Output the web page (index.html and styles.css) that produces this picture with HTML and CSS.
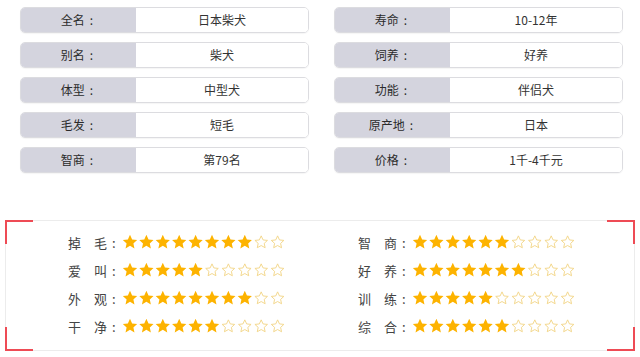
FILE: index.html
```html
<!DOCTYPE html>
<html lang="zh-CN">
<head>
<meta charset="utf-8">
<title>日本柴犬</title>
<link rel="stylesheet" href="styles.css">
</head>
<body>
<svg class="defs" width="0" height="0" aria-hidden="true">
  <defs>
    <symbol id="sf" viewBox="0 0 24 24"><path class="full" d="M12 1.2l3.2 7 7.5.8-5.6 5.1 1.6 7.5L12 17.8l-6.7 3.8 1.6-7.5L1.3 9l7.5-.8z"/></symbol>
    <symbol id="se" viewBox="0 0 24 24"><path class="empty" d="M12 2.8l2.8 6.1 6.6.7-4.9 4.5 1.4 6.5L12 17.3l-5.9 3.3 1.4-6.5-4.9-4.5 6.6-.7z"/></symbol>
  </defs>
</svg>

<div class="info">
  <div class="item"><span class="k">全名<span class="kc">:</span></span><span class="v">日本柴犬</span></div>
  <div class="item"><span class="k">寿命<span class="kc">:</span></span><span class="v">10-12年</span></div>
  <div class="item"><span class="k">别名<span class="kc">:</span></span><span class="v">柴犬</span></div>
  <div class="item"><span class="k">饲养<span class="kc">:</span></span><span class="v">好养</span></div>
  <div class="item"><span class="k">体型<span class="kc">:</span></span><span class="v">中型犬</span></div>
  <div class="item"><span class="k">功能<span class="kc">:</span></span><span class="v">伴侣犬</span></div>
  <div class="item"><span class="k">毛发<span class="kc">:</span></span><span class="v">短毛</span></div>
  <div class="item"><span class="k">原产地<span class="kc">:</span></span><span class="v">日本</span></div>
  <div class="item"><span class="k">智商<span class="kc">:</span></span><span class="v">第79名</span></div>
  <div class="item"><span class="k">价格<span class="kc">:</span></span><span class="v">1千-4千元</span></div>
</div>

<div class="rating">
  <span class="corner tl"></span><span class="corner tr"></span>
  <span class="corner bl"></span><span class="corner br"></span>

  <div class="row"><span class="lbl">掉　毛<span class="colon">:</span></span>
    <svg class="stars" width="164" height="16" viewBox="0 0 164 16"><use href="#sf" x="0" width="16" height="16"/><use href="#sf" x="16.4" width="16" height="16"/><use href="#sf" x="32.8" width="16" height="16"/><use href="#sf" x="49.2" width="16" height="16"/><use href="#sf" x="65.6" width="16" height="16"/><use href="#sf" x="82" width="16" height="16"/><use href="#sf" x="98.4" width="16" height="16"/><use href="#sf" x="114.8" width="16" height="16"/><use href="#se" x="131.2" width="16" height="16"/><use href="#se" x="147.6" width="16" height="16"/></svg></div>
  <div class="row"><span class="lbl">智　商<span class="colon">:</span></span>
    <svg class="stars" width="164" height="16" viewBox="0 0 164 16"><use href="#sf" x="0" width="16" height="16"/><use href="#sf" x="16.4" width="16" height="16"/><use href="#sf" x="32.8" width="16" height="16"/><use href="#sf" x="49.2" width="16" height="16"/><use href="#sf" x="65.6" width="16" height="16"/><use href="#sf" x="82" width="16" height="16"/><use href="#se" x="98.4" width="16" height="16"/><use href="#se" x="114.8" width="16" height="16"/><use href="#se" x="131.2" width="16" height="16"/><use href="#se" x="147.6" width="16" height="16"/></svg></div>

  <div class="row"><span class="lbl">爱　叫<span class="colon">:</span></span>
    <svg class="stars" width="164" height="16" viewBox="0 0 164 16"><use href="#sf" x="0" width="16" height="16"/><use href="#sf" x="16.4" width="16" height="16"/><use href="#sf" x="32.8" width="16" height="16"/><use href="#sf" x="49.2" width="16" height="16"/><use href="#sf" x="65.6" width="16" height="16"/><use href="#se" x="82" width="16" height="16"/><use href="#se" x="98.4" width="16" height="16"/><use href="#se" x="114.8" width="16" height="16"/><use href="#se" x="131.2" width="16" height="16"/><use href="#se" x="147.6" width="16" height="16"/></svg></div>
  <div class="row"><span class="lbl">好　养<span class="colon">:</span></span>
    <svg class="stars" width="164" height="16" viewBox="0 0 164 16"><use href="#sf" x="0" width="16" height="16"/><use href="#sf" x="16.4" width="16" height="16"/><use href="#sf" x="32.8" width="16" height="16"/><use href="#sf" x="49.2" width="16" height="16"/><use href="#sf" x="65.6" width="16" height="16"/><use href="#sf" x="82" width="16" height="16"/><use href="#sf" x="98.4" width="16" height="16"/><use href="#se" x="114.8" width="16" height="16"/><use href="#se" x="131.2" width="16" height="16"/><use href="#se" x="147.6" width="16" height="16"/></svg></div>

  <div class="row"><span class="lbl">外　观<span class="colon">:</span></span>
    <svg class="stars" width="164" height="16" viewBox="0 0 164 16"><use href="#sf" x="0" width="16" height="16"/><use href="#sf" x="16.4" width="16" height="16"/><use href="#sf" x="32.8" width="16" height="16"/><use href="#sf" x="49.2" width="16" height="16"/><use href="#sf" x="65.6" width="16" height="16"/><use href="#sf" x="82" width="16" height="16"/><use href="#sf" x="98.4" width="16" height="16"/><use href="#sf" x="114.8" width="16" height="16"/><use href="#se" x="131.2" width="16" height="16"/><use href="#se" x="147.6" width="16" height="16"/></svg></div>
  <div class="row"><span class="lbl">训　练<span class="colon">:</span></span>
    <svg class="stars" width="164" height="16" viewBox="0 0 164 16"><use href="#sf" x="0" width="16" height="16"/><use href="#sf" x="16.4" width="16" height="16"/><use href="#sf" x="32.8" width="16" height="16"/><use href="#sf" x="49.2" width="16" height="16"/><use href="#sf" x="65.6" width="16" height="16"/><use href="#se" x="82" width="16" height="16"/><use href="#se" x="98.4" width="16" height="16"/><use href="#se" x="114.8" width="16" height="16"/><use href="#se" x="131.2" width="16" height="16"/><use href="#se" x="147.6" width="16" height="16"/></svg></div>

  <div class="row"><span class="lbl">干　净<span class="colon">:</span></span>
    <svg class="stars" width="164" height="16" viewBox="0 0 164 16"><use href="#sf" x="0" width="16" height="16"/><use href="#sf" x="16.4" width="16" height="16"/><use href="#sf" x="32.8" width="16" height="16"/><use href="#sf" x="49.2" width="16" height="16"/><use href="#sf" x="65.6" width="16" height="16"/><use href="#sf" x="82" width="16" height="16"/><use href="#se" x="98.4" width="16" height="16"/><use href="#se" x="114.8" width="16" height="16"/><use href="#se" x="131.2" width="16" height="16"/><use href="#se" x="147.6" width="16" height="16"/></svg></div>
  <div class="row"><span class="lbl">综　合<span class="colon">:</span></span>
    <svg class="stars" width="164" height="16" viewBox="0 0 164 16"><use href="#sf" x="0" width="16" height="16"/><use href="#sf" x="16.4" width="16" height="16"/><use href="#sf" x="32.8" width="16" height="16"/><use href="#sf" x="49.2" width="16" height="16"/><use href="#sf" x="65.6" width="16" height="16"/><use href="#sf" x="82" width="16" height="16"/><use href="#se" x="98.4" width="16" height="16"/><use href="#se" x="114.8" width="16" height="16"/><use href="#se" x="131.2" width="16" height="16"/><use href="#se" x="147.6" width="16" height="16"/></svg></div>
</div>
</body>
</html>
```

FILE: styles.css
```css
html, body {
  margin: 0;
  padding: 0;
  background: #fff;
}

body {
  font-family: "Noto Sans CJK SC", "Microsoft YaHei", sans-serif;
  color: #333;
}

.defs {
  position: absolute;
  width: 0;
  height: 0;
  overflow: hidden;
}

.full {
  fill: #fdb300;
}

.empty {
  fill: none;
  stroke: #f2d586;
  stroke-width: 1.4;
  stroke-linejoin: round;
}

/* info grid */
.info {
  display: grid;
  grid-template-columns: 289px 289px;
  column-gap: 25px;
  row-gap: 9px;
  padding: 7px 0 0 20px;
}

.item {
  display: flex;
  height: 26px;
  box-sizing: border-box;
  border: 1px solid #dcdce0;
  border-radius: 5px;
  overflow: hidden;
  font-size: 12px;
  line-height: 24px;
  box-shadow: 0 1px 1px rgba(0, 0, 0, 0.04);
}

.k {
  width: 115px;
  flex: none;
  background: #d4d4de;
  text-align: center;
  color: #2b2b2b;
}

.kc {
  display: inline-block;
  margin: 0 3px 0 5px;
}

.v {
  flex: 1;
  text-align: center;
  color: #333;
  background: #fff;
}

/* rating panel */
.rating {
  position: relative;
  margin: 47px 0 0 5px;
  width: 630px;
  height: 131px;
  box-sizing: border-box;
  border: 1px solid #ececec;
  padding: 7px 0 0 62px;
  display: grid;
  grid-template-columns: 290px 290px;
  grid-auto-rows: 28px;
}

.corner {
  position: absolute;
  width: 26px;
  height: 22px;
  border: 0 solid #ee4b55;
}

.tl { top: -1px; left: -1px; border-top-width: 2px; border-left-width: 2px; }
.tr { top: -1px; right: -1px; border-top-width: 2px; border-right-width: 2px; }
.bl { bottom: -1px; left: -1px; border-bottom-width: 2px; border-left-width: 2px; }
.br { bottom: -1px; right: -1px; border-bottom-width: 2px; border-right-width: 2px; }

.row {
  display: flex;
  align-items: center;
}

.lbl {
  width: 54px;
  flex: none;
  font-size: 13px;
  color: #444;
  white-space: nowrap;
}

.colon {
  margin-left: 5px;
}

.stars {
  display: block;
  flex: none;
}
```
